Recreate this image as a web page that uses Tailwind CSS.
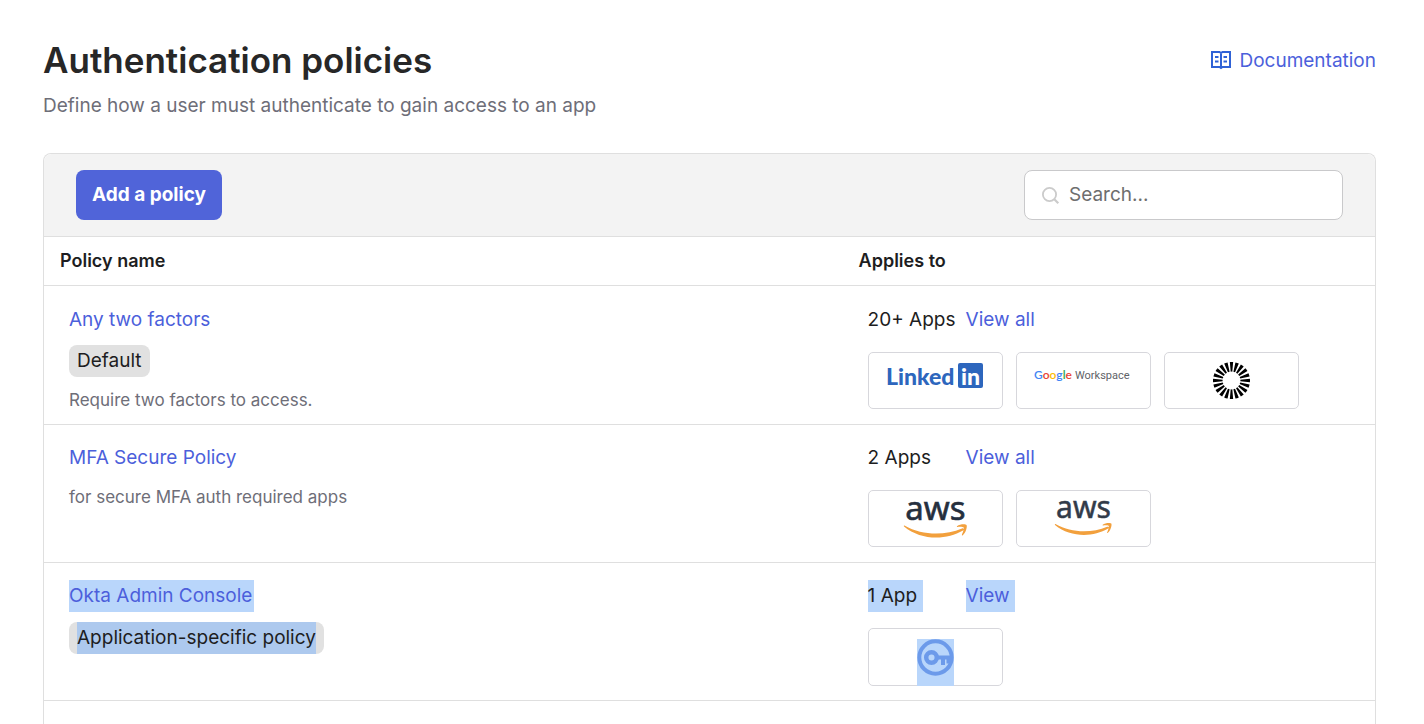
<!DOCTYPE html>
<html lang="en">
<head>
<meta charset="utf-8">
<meta name="viewport" content="width=device-width, initial-scale=1">
<title>Authentication policies</title>
<script src="https://cdn.jsdelivr.net/npm/@tailwindcss/browser@4"></script>
</head>
<body class="overflow-hidden bg-white font-['Inter',sans-serif] text-[19px] leading-8 text-[#1d1d21]">
<main class="flex h-screen flex-col pr-12 pl-[43px] pt-9">
  <header class="flex items-start justify-between">
    <div>
      <h1 class="text-[35px] leading-12 font-semibold text-[#272727]">Authentication policies</h1>
      <p class="mt-[6px] text-[#6e6e78]">Define how a user must authenticate to gain access to an app</p>
    </div>
    <a href="#" class="mt-[9px] flex items-center gap-2 text-[#4c5fdb]">
      <svg class="mb-[3px] size-5" viewBox="0 0 20 20" fill="none" stroke="#2f62d6" stroke-width="2" aria-hidden="true"><path d="M1 2h7.5L10 3l1.500-1H19v15h-7.500L10 18l-1.500-1H1zM10 3v15"/><path stroke-width="1.800" d="M4 7h3.500M4 11.500h3.500M12.500 7H16M12.500 11.500H16"/></svg>
      Documentation
    </a>
  </header>

  <section class="mt-[31px] grow rounded-t-lg border border-b-0 border-[#dfdfdf]">
    <div class="flex items-center justify-between rounded-t-lg border-b border-[#dfdfdf] bg-[#f3f3f3] px-8 py-4">
      <button type="button" class="h-[50px] rounded-lg bg-[#5064d9] px-4 font-bold text-white">Add a policy</button>
      <label class="flex h-[50px] w-[319px] items-center gap-2 rounded-lg border border-[#c9c9cb] bg-white px-4">
        <svg class="mt-[2px] size-5 shrink-0" viewBox="0 0 20 20" fill="none" stroke="#cbcbcb" stroke-width="1.800" aria-hidden="true"><circle cx="8.500" cy="8.500" r="6.600"/><path d="M13.300 13.300l4 4" stroke-width="2.200"/></svg>
        <input type="search" aria-label="Search policies" placeholder="Search..." class="w-full min-w-0 outline-none placeholder:text-[#6e6e6e]">
      </label>
    </div>
    <table class="w-full table-fixed border-collapse text-left">
      <thead>
        <tr class="border-b border-[#dfdfdf] text-[18px]">
          <th scope="col" class="w-3/5 px-4 py-2 font-semibold">Policy name</th>
          <th scope="col" class="px-4 py-2 font-semibold">Applies to</th>
        </tr>
      </thead>
      <tbody class="align-top">
        <tr class="border-b border-[#dfdfdf]">
          <td class="pt-[18px] pb-[11px] pl-[25px]">
            <a href="#" class="block text-[#4c5fdb]">Any two factors</a>
            <div class="mt-[9px] w-fit rounded-lg bg-[#e1e1e1] px-2">Default</div>
            <p class="mt-[11px] text-[17px] leading-6 text-[#6e6e78]">Require two factors to access.</p>
          </td>
          <td class="pt-[18px] pb-[15px] pl-[25px]">
            <div class="flex"><span class="w-[98px]">20+ Apps</span><a href="#" class="text-[#4c5fdb]">View all</a></div>
            <div class="mt-4 flex gap-[13px]">
              <div class="h-[57px] w-[135px] rounded-[5px] border border-[#d7d7dc]">
                <svg class="size-full" viewBox="0 0 133 55" role="img" aria-label="LinkedIn"><text x="17" y="32" font-family="Lato" font-weight="900" font-size="23" fill="#2d66bd">Linked</text><rect x="89" y="10" width="25" height="25" rx="2" fill="#2d66bd"/><text x="92" y="32" font-family="Lato" font-weight="900" font-size="23" fill="#fff">in</text></svg>
              </div>
              <div class="h-[57px] w-[135px] rounded-[5px] border border-[#d7d7dc]">
                <svg class="size-full" viewBox="0 0 133 55" role="img" aria-label="Google Workspace"><text x="17" y="26" font-family="Lato" font-weight="600" font-size="12"><tspan fill="#4285f4">G</tspan><tspan fill="#ea4335">o</tspan><tspan fill="#fbbc04">o</tspan><tspan fill="#4285f4">g</tspan><tspan fill="#34a853">l</tspan><tspan fill="#ea4335">e</tspan></text><text x="58" y="26" font-family="Roboto" font-size="11" fill="#5f6368">Workspace</text></svg>
              </div>
              <div class="h-[57px] w-[135px] rounded-[5px] border border-[#d7d7dc]">
                <svg class="size-full" viewBox="0 0 133 55" role="img" aria-label="Okta"><circle cx="66.500" cy="27.500" r="13.700" fill="none" stroke="#000" stroke-width="9.600" pathLength="200" stroke-dasharray="6 4" stroke-dashoffset="3"/></svg>
              </div>
            </div>
          </td>
        </tr>
        <tr class="border-b border-[#dfdfdf]">
          <td class="pt-[17px] pb-[15px] pl-[25px]">
            <a href="#" class="block text-[#4c5fdb]">MFA Secure Policy</a>
            <p class="mt-[11px] text-[17px] leading-6 text-[#6e6e78]">for secure MFA auth required apps</p>
          </td>
          <td class="pt-[17px] pb-[15px] pl-[25px]">
            <div class="flex"><span class="w-[98px]">2 Apps</span><a href="#" class="text-[#4c5fdb]">View all</a></div>
            <div class="mt-4 flex gap-[13px]">
              <div class="h-[57px] w-[135px] rounded-[5px] border border-[#d7d7dc]">
                <svg class="size-full overflow-visible" viewBox="0 0 133 55" role="img" aria-label="AWS"><text x="66.500" y="29" text-anchor="middle" font-family="Noto Sans" font-size="33" fill="#252f3e" stroke="#252f3e" stroke-width=".6">aws</text><path d="M35.500 34.500C54 45 76 44.500 93 37.500c1.600-.6 2.500 1 1 2C77 49.500 52 49.500 35 35.500c-.4-.6 0-1.200.5-1zM88 35.200c2.500-2 8.500-2.400 9.500-1.200s-.4 7.500-3.700 10.300c-.6.5-1.200.2-.9-.5 1-2.300 2.400-6.300 1.800-7.200s-4.500-.8-6.200-.6c-.6 0-.8-.4-.5-.8z" fill="#f2a03d"/></svg>
              </div>
              <div class="h-[57px] w-[135px] rounded-[5px] border border-[#d7d7dc]">
                <svg class="size-full overflow-visible" viewBox="0 0 133 55" role="img" aria-label="AWS"><text x="66.500" y="27" text-anchor="middle" font-family="Noto Sans" font-size="30" fill="#323b49" stroke="#323b49" stroke-width=".5">aws</text><path transform="translate(6.500 2) scale(.9)" d="M35.500 34.500C54 45 76 44.500 93 37.500c1.600-.6 2.500 1 1 2C77 49.500 52 49.500 35 35.500c-.4-.6 0-1.200.5-1zM88 35.200c2.500-2 8.500-2.400 9.500-1.200s-.4 7.500-3.700 10.300c-.6.5-1.200.2-.9-.5 1-2.300 2.400-6.300 1.800-7.200s-4.500-.8-6.200-.6c-.6 0-.8-.4-.5-.8z" fill="#f2a03d"/></svg>
              </div>
            </div>
          </td>
        </tr>
        <tr class="border-b border-[#dfdfdf]">
          <td class="pt-[17px] pb-[14px] pl-[25px]">
            <a href="#" class="block w-fit bg-[#b9d6fb] pr-[2px] text-[#4c5fdb]">Okta Admin Console</a>
            <div class="mt-[10px] w-fit rounded-lg bg-[#e1e1e1] px-2"><span class="block bg-[#adc9ee]">Application-specific policy</span></div>
          </td>
          <td class="pt-[17px] pb-[14px] pl-[25px]">
            <div class="flex"><div class="w-[98px]"><span class="block w-fit bg-[#b9d6fb] pr-[6px]">1 App</span></div><a href="#" class="bg-[#b9d6fb] pr-[5px] text-[#4c5fdb]">View</a></div>
            <div class="mt-4 flex gap-[13px]">
              <div class="h-[58px] w-[135px] rounded-[5px] border border-[#d7d7dc]">
                <svg class="size-full overflow-visible" viewBox="0 0 133 56" role="img" aria-label="Okta Admin Console"><path d="M48 10h37v47H48z" fill="#b9d6fb"/><g fill="none" stroke="#6c9aea"><circle cx="66.500" cy="28.500" r="16.200" stroke-width="4"/><circle cx="62.500" cy="28.500" r="5.300" stroke-width="4.500"/><path d="M69 28.500h14M74 29v7M79.500 29v5.500" stroke-width="4"/></g></svg>
              </div>
            </div>
          </td>
        </tr>
      </tbody>
    </table>
  </section>
</main>
</body>
</html>
